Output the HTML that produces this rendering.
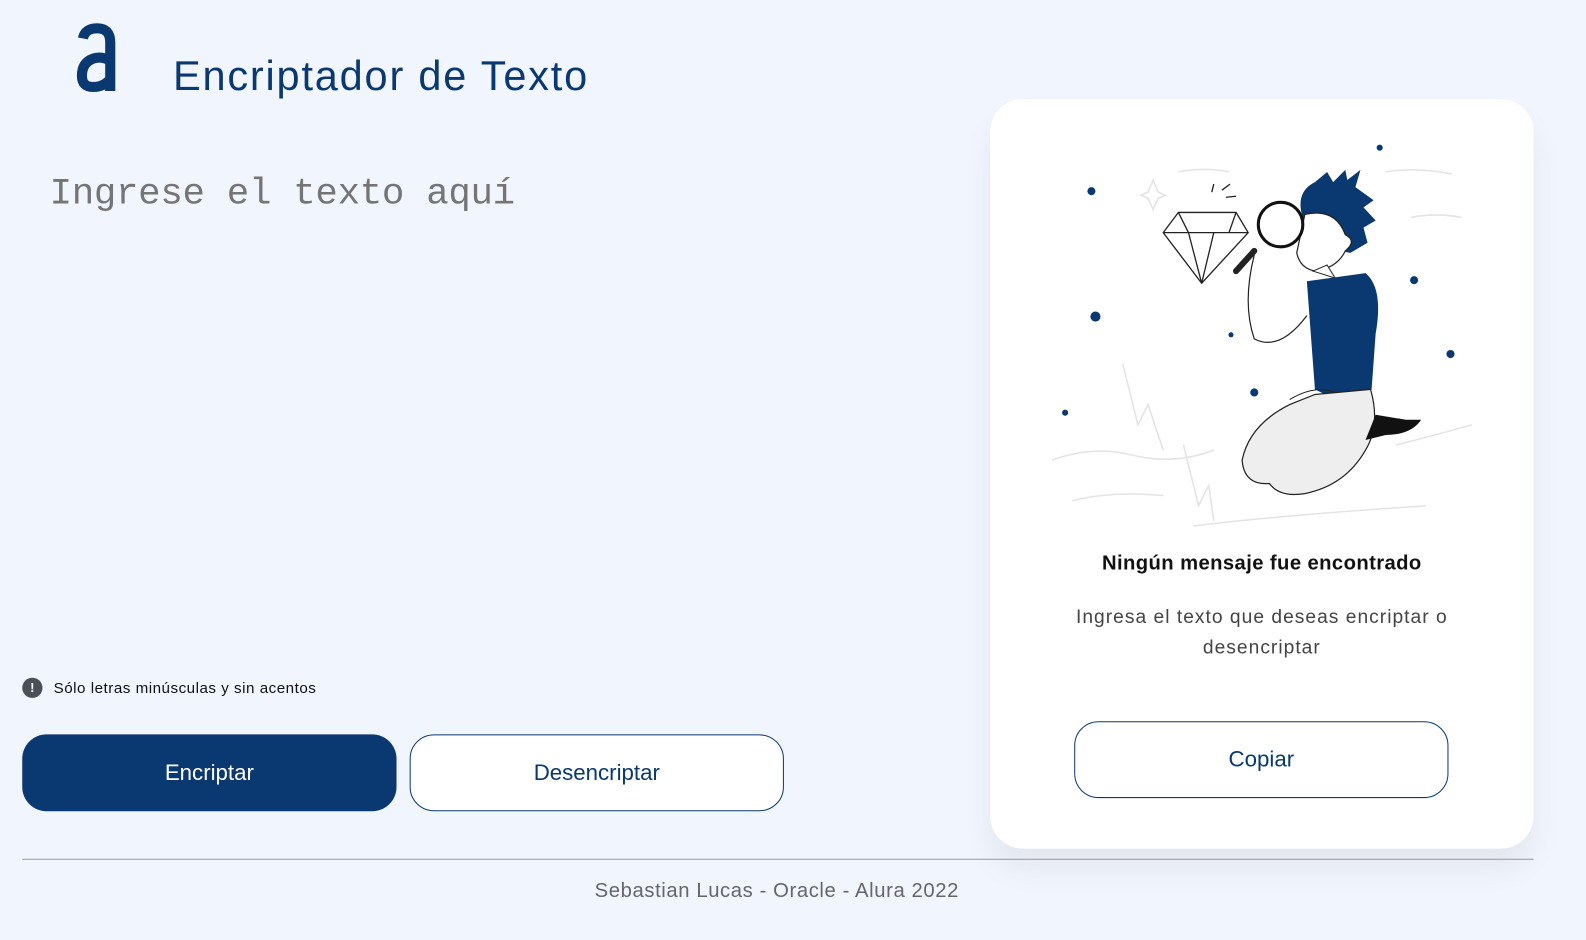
<!DOCTYPE html>
<html><head><meta charset="utf-8">
<style>
*{margin:0;padding:0;box-sizing:border-box}
html,body{width:1586px;height:929px;overflow:hidden;background:#f1f5fd;font-family:"Liberation Sans",sans-serif}
#w{position:absolute;left:0;top:0;width:1568px;height:918px;transform:scale(1.0115);transform-origin:0 0}
.abs{position:absolute}
.title{left:171px;top:52px;font-size:41px;color:#0a3871;letter-spacing:1.8px}
.ph{left:49px;top:171px;font-family:"Liberation Mono",monospace;font-size:37px;color:#757575;letter-spacing:-0.3px}
.warn{left:22px;top:670px;display:flex;align-items:center;font-size:15px;color:#111;letter-spacing:0.5px}
.warn i{display:inline-block;width:20px;height:20px;border-radius:50%;background:#495057;color:#fff;font-style:normal;font-weight:bold;font-size:13px;text-align:center;line-height:20px;margin-right:11px;letter-spacing:0}
.btn{height:76px;width:370px;border-radius:24px;font-size:22px;display:flex;align-items:center;justify-content:center}
.b1{left:22px;top:726px;background:#0a3871;color:#fff}
.b2{left:405px;top:726px;background:#fff;color:#0a3871;border:1px solid #0a3871}
.card{left:979px;top:98px;width:537px;height:741px;background:#fff;border-radius:32px;box-shadow:0 20px 30px rgba(0,0,0,0.06)}
.h{left:979px;width:537px;text-align:center;top:546px;font-size:20px;font-weight:bold;color:#111;letter-spacing:0.4px}
.p{left:1030px;width:435px;text-align:center;top:596px;font-size:19px;color:#444;line-height:30px;letter-spacing:1px}
.b3{left:1062px;top:713px;background:#fff;color:#0a3871;border:1px solid #0a3871}
.line{left:22px;top:849px;width:1494px;height:1px;background:#999}
.foot{left:0;width:1536px;text-align:center;top:870px;font-size:20px;color:#666;letter-spacing:0.6px}
</style></head><body><div id="w">
<svg class="abs" style="left:70px;top:20px" width="52" height="76"><path d="M12 18 Q14 8 26 8 Q39 8 39 22 L39 70 M39 40 Q30 35 22 38 Q11 42 11 55 Q11 66 22 66 Q33 66 39 58" fill="none" stroke="#0a3871" stroke-width="10" stroke-linecap="butt"/></svg>
<div class="abs title">Encriptador de Texto</div>
<div class="abs ph">Ingrese el texto aquí</div>
<div class="abs warn"><i>!</i>Sólo letras minúsculas y sin acentos</div>
<div class="abs btn b1">Encriptar</div>
<div class="abs btn b2">Desencriptar</div>
<div class="abs card"></div>
<svg class="abs" style="left:0;top:0" width="1586" height="929">
<g fill="none" stroke="#e3e3e3" stroke-width="1.5">
<path d="M1040 455 Q1080 440 1120 450 T1200 445"/><path d="M1060 495 Q1100 485 1150 490"/><path d="M1110 360 L1125 420 L1135 400 L1150 445"/><path d="M1170 440 L1185 500 L1195 480 L1200 515"/><path d="M1380 440 Q1420 430 1455 420"/><path d="M1180 520 Q1260 510 1410 500"/><path d="M1370 170 Q1400 165 1435 172"/><path d="M1395 215 Q1420 210 1445 215"/><path d="M1165 170 Q1190 165 1215 170"/>
<path d="M1140 178 L1145 190 L1152 193 L1145 196 L1140 207 L1135 196 L1128 193 L1135 190Z"/>
</g>
<g fill="#0a3871"><circle cx="1079" cy="189" r="4"/><circle cx="1083" cy="313" r="5"/><circle cx="1364" cy="146" r="3"/><circle cx="1398" cy="277" r="4"/><circle cx="1434" cy="350" r="4"/><circle cx="1217" cy="331" r="2.5"/><circle cx="1240" cy="388" r="4"/><circle cx="1053" cy="408" r="3"/></g>
<g fill="none" stroke="#222" stroke-width="1.3">
<path d="M1165 210 L1222 210 L1234 230 L1188 280 L1150 230 Z M1150 230 L1234 230 M1175 230 L1188 280 L1200 230 M1165 210 L1175 230 M1222 210 L1215 230"/>
<path d="M1200 182 L1198 190 M1208 188 L1216 182 M1212 195 L1222 194"/>
</g>
<path d="M1288 215 Q1280 190 1300 180 L1312 170 L1318 180 L1330 168 L1332 178 L1345 168 L1340 185 L1358 198 L1348 205 L1360 218 L1348 225 L1352 240 L1335 250 L1325 248 Z" fill="#0a3871"/>
<path d="M1290 212 Q1320 205 1330 232 Q1342 238 1330 248 Q1322 265 1300 268 Q1285 265 1282 250 Z" fill="#fff" stroke="#222" stroke-width="1.2"/>
<path d="M1298 268 L1312 262 L1320 275 Z" fill="#fff" stroke="#222"/>
<path d="M1292 278 L1350 270 Q1368 285 1360 330 L1356 385 L1320 395 L1300 385 Z" fill="#0a3871"/>
<path d="M1240 252 Q1228 300 1240 335 Q1265 348 1292 312" fill="#fff" stroke="#222" stroke-width="1.2"/>
<path d="M1300 390 L1355 385 Q1365 420 1350 445 Q1330 480 1290 488 Q1265 492 1255 478 Q1230 480 1228 455 Q1235 420 1275 400 Z" fill="#eee" stroke="#222" stroke-width="1.2"/>
<path d="M1275 395 Q1300 380 1320 388" fill="none" stroke="#222"/>
<path d="M1360 410 L1390 415 L1405 415 Q1395 430 1370 430 L1350 435 Z" fill="#111"/>
<path d="M1222 268 L1240 248" stroke="#222" stroke-width="6" stroke-linecap="round"/>
<circle cx="1266" cy="222" r="22" fill="rgba(255,255,255,0.6)" stroke="#111" stroke-width="3"/>
</svg>
<div class="abs h">Ningún mensaje fue encontrado</div>
<div class="abs p">Ingresa el texto que deseas encriptar o desencriptar</div>
<div class="abs btn b3">Copiar</div>
<div class="abs line"></div>
<div class="abs foot">Sebastian Lucas - Oracle - Alura 2022</div>
</div></body></html>
